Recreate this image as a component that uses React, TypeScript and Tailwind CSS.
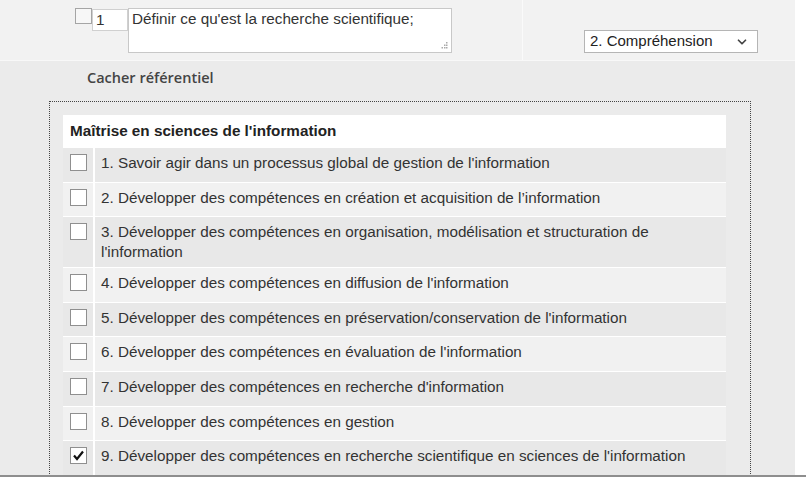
import { ChevronDown } from 'lucide-react';

const items = [
  "1. Savoir agir dans un processus global de gestion de l'information",
  '2. Développer des compétences en création et acquisition de l’information',
  "3. Développer des compétences en organisation, modélisation et structuration de l'information",
  "4. Développer des compétences en diffusion de l'information",
  "5. Développer des compétences en préservation/conservation de l'information",
  "6. Développer des compétences en évaluation de l'information",
  "7. Développer des compétences en recherche d'information",
  '8. Développer des compétences en gestion',
  "9. Développer des compétences en recherche scientifique en sciences de l'information",
];

function Box({ checked }: { checked?: boolean }) {
  return (
    <div className="w-[17px] h-[17px] bg-white border border-[#8f8f8f] flex items-center justify-center">
      {checked && (
        <svg width="13" height="13" viewBox="0 0 13 13">
          <path d="M2 6.5 L5 10 L11 2.5" fill="none" stroke="#111" strokeWidth="2.2" />
        </svg>
      )}
    </div>
  );
}

export default function App() {
  return (
    <div
      className="relative w-[806px] h-[477px] overflow-hidden bg-white text-[#333]"
      style={{ fontFamily: '"Liberation Sans", Arial, sans-serif' }}
    >
      <div className="w-[795px] bg-[#ebebeb] min-h-full">
        {/* Top row */}
        <div className="flex h-[61px] bg-[#f2f2f2] border-b border-[#f8f8f8]">
          <div className="w-[523px] border-r border-[#fafafa] flex items-start pt-[8px] pl-[75px]">
            <div className="w-[17px] h-[16px] bg-[#f7f7f7] border border-[#a5a5a5]" />
            <div className="w-[36px] h-[22px] mt-[1px] bg-white border border-[#d0d0d0] text-[15.25px] leading-[20px] pl-[3px]">
              1
            </div>
            <div className="relative w-[324px] h-[45px] bg-white border border-[#c8c8c8] text-[15.25px] leading-[18px] pl-[3px] pt-[1px]">
              Définir ce qu'est la recherche scientifique;
              <svg className="absolute right-[3px] bottom-[3px]" width="7" height="7" viewBox="0 0 7 7">
                <rect x="5" y="0" width="1.5" height="1.5" fill="#aaa" />
                <rect x="3" y="2.5" width="1.5" height="1.5" fill="#aaa" />
                <rect x="5" y="2.5" width="1.5" height="1.5" fill="#aaa" />
                <rect x="0.5" y="5" width="1.5" height="1.5" fill="#aaa" />
                <rect x="3" y="5" width="1.5" height="1.5" fill="#aaa" />
                <rect x="5" y="5" width="1.5" height="1.5" fill="#aaa" />
              </svg>
            </div>
          </div>
          <div className="flex-1 pt-[30px] pl-[61px]">
            <div className="w-[174px] h-[23px] bg-white border border-[#b5b5b5] flex items-center justify-between pl-[5px] pr-[8px] text-[15px] text-[#222]">
              <span>2. Compréhension</span>
              <ChevronDown size={14} strokeWidth={3} className="text-[#444]" />
            </div>
          </div>
        </div>

        {/* Body */}
        <div className="pt-[7px]">
          <div
            className="pl-[87px] text-[14.5px] leading-[20px] font-semibold text-[#444]"
            style={{ fontFamily: '"Open Sans", sans-serif' }}
          >
            Cacher référentiel
          </div>
          <div className="ml-[49px] mt-[13px] w-[702px] border border-dotted border-[#444] pt-[13px] pl-[13px] pr-[24px] pb-[20px]">
            <div className="w-[663px]">
              <div className="h-[32px] bg-white flex items-center pl-[7px] text-[15.25px] font-bold text-[#222]">
                Maîtrise en sciences de l'information
              </div>
              {items.map((t, i) => (
                <div
                  key={i}
                  className={`flex border-t border-white ${i % 2 === 0 ? 'bg-[#e8e8e8]' : 'bg-[#f1f1f1]'}`}
                >
                  <div className="w-[32px] min-h-[33.6px] shrink-0 border-r-2 border-white pt-[6px] pl-[7px]">
                    <Box checked={i === 8} />
                  </div>
                  <div className="flex-1 py-[5px] pl-[6px] pr-[6px] text-[15.25px] leading-[20px] text-[#333]">
                    {t}
                  </div>
                </div>
              ))}
            </div>
          </div>
        </div>
      </div>
      <div className="absolute left-0 right-0 bottom-0 h-[2px] bg-[#8e8e8e]" />
    </div>
  );
}
